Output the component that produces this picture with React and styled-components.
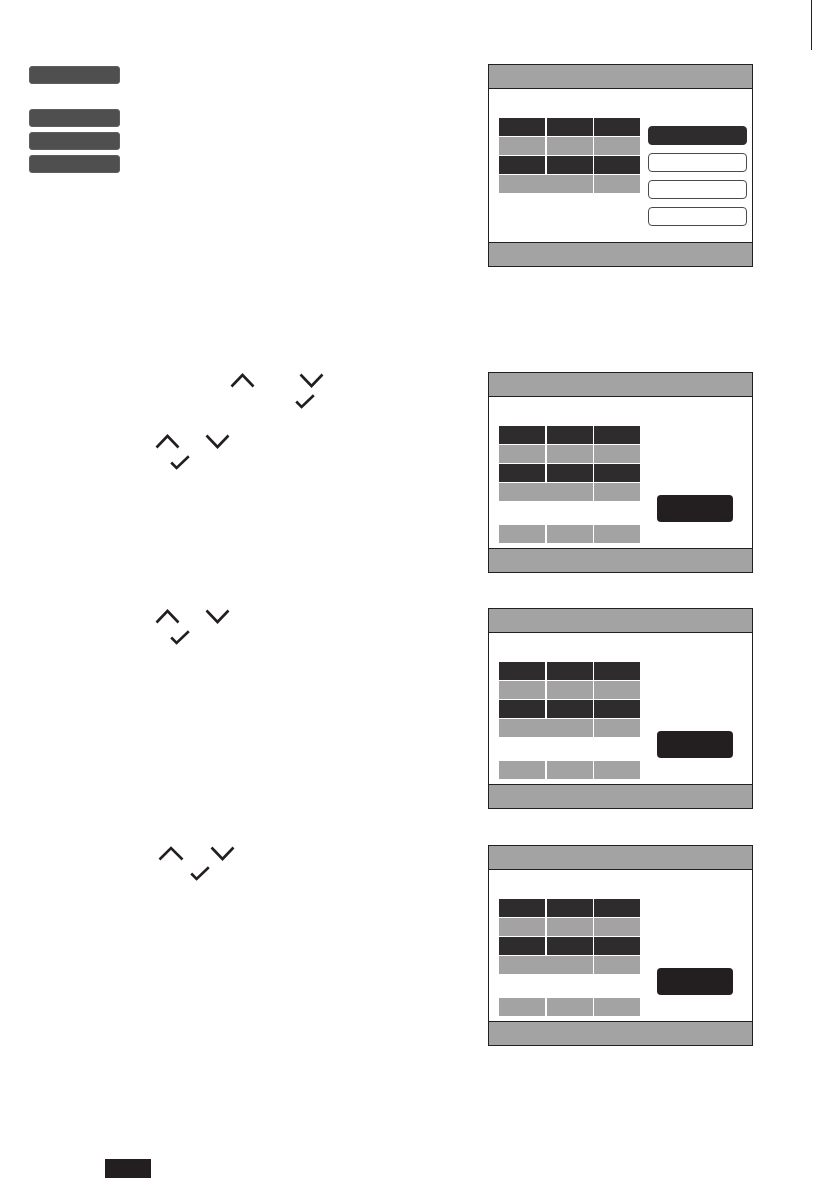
import React from 'react'
import styled, {createGlobalStyle} from 'styled-components'

const GlobalStyle = createGlobalStyle`
    html, body {
        margin: 0;
        padding: 0;
        background: #ffffff;
        font-family: "Liberation Sans", Arial, sans-serif;
    }
`

const INK = '#231f20'
const CELL_DARK = '#2e2c2d'
const CELL_GRAY = '#a3a3a3'

const Page = styled.div`
    width: 839px;
    height: 1191px;
    display: flex;
    flex-direction: column;
    background: #fff;
    overflow: hidden;
`

// crop mark strip along the top
const TopStrip = styled.div`
    height: 64px;
    display: flex;
`
const CropMark = styled.div`
    margin-left: 811px;
    width: 1px;
    height: 50px;
    background: ${INK};
`

const Section = styled.section`
    display: flex;
    margin-top: ${p => p.$top || 0}px;
`
const LeftCol = styled.div`
    flex: 1;
    display: flex;
    flex-direction: column;
`
const PanelSlot = styled.div`
    width: 265px;
    margin-right: 86px;
`

// menu key buttons on the left
const KeyStack = styled.div`
    display: flex;
    flex-direction: column;
    padding-left: 29px;
    padding-top: 2px;
`
const Key = styled.div`
    width: 91px;
    height: 18px;
    box-sizing: border-box;
    border-radius: 3px;
    background: #4f4f4f;
    border: 1px solid #5e5e5e;
    margin-top: ${p => p.$gap || 0}px;
`

// lines of (invisible) text holding the key glyphs
const IconLine = styled.div`
    display: flex;
    align-items: flex-start;
    padding-left: ${p => p.$indent}px;
    gap: ${p => p.$gap || 0}px;
    margin-top: ${p => p.$top || 0}px;
    height: ${p => p.$h || 15}px;
`

const Panel = styled.div`
    box-sizing: border-box;
    width: 265px;
    height: ${p => p.$h || 201}px;
    border: 1.5px solid ${INK};
    display: flex;
    flex-direction: column;
`
const Bar = styled.div`
    height: 23px;
    background: ${CELL_GRAY};
    border-${p => p.$edge}: 1.5px solid ${INK};
`
const Body = styled.div`
    flex: 1;
    display: flex;
    padding: 29px 0 0 10px;
`
const Grid = styled.div`
    display: grid;
    grid-template-columns: 46px 46px 46px;
    column-gap: 1.5px;
    row-gap: 1px;
    align-content: start;
`
const Cell = styled.div`
    height: 18px;
    background: ${p => (p.$dark ? CELL_DARK : CELL_GRAY)};
    grid-column: ${p => (p.$span ? `span ${p.$span}` : 'auto')};
`
const RowGap = styled.div`
    grid-column: span 3;
    height: 22px;
`
const Options = styled.div`
    display: flex;
    flex-direction: column;
    gap: 8px;
    margin-left: 8px;
    padding-top: 8px;
`
const Option = styled.div`
    box-sizing: border-box;
    width: 99px;
    height: 19px;
    border-radius: 4px;
    background: ${p => (p.$active ? CELL_DARK : '#fff')};
    border: 1px solid ${p => (p.$active ? CELL_DARK : '#4a4a4a')};
`
const OkButton = styled.div`
    width: 76px;
    height: 27px;
    border-radius: 4px;
    background: ${INK};
    margin-left: 17px;
    margin-top: 69px;
`

const PageTag = styled.div`
    width: 46px;
    height: 19px;
    background: ${INK};
    margin-left: 105px;
`

const Up = ({w = 25}) => (
    <svg width={w} height="15" viewBox={`0 0 ${w} 15`}>
        <polyline points={`1.5,13.5 ${w / 2},2 ${w - 1.5},13.5`} fill="none" stroke={INK} strokeWidth="2.6" />
    </svg>
)
const Down = ({w = 25}) => (
    <svg width={w} height="15" viewBox={`0 0 ${w} 15`}>
        <polyline points={`1.5,1.5 ${w / 2},13 ${w - 1.5},1.5`} fill="none" stroke={INK} strokeWidth="2.6" />
    </svg>
)
const Check = () => (
    <svg width="20" height="15" viewBox="0 0 20 15">
        <polyline points="1.2,7.5 6.6,13 18.8,1.2" fill="none" stroke={INK} strokeWidth="2.6" />
    </svg>
)

const DataGrid = ({extra}) => (
    <Grid>
        <Cell $dark /><Cell $dark /><Cell $dark />
        <Cell /><Cell /><Cell />
        <Cell $dark /><Cell $dark /><Cell $dark />
        <Cell $span={2} /><Cell />
        {extra && <RowGap />}
        {extra && <Cell />}
        {extra && <Cell />}
        {extra && <Cell />}
    </Grid>
)

const MenuScreen = () => (
    <Panel $h={203}>
        <Bar $edge="bottom" />
        <Body>
            <DataGrid />
            <Options>
                <Option $active />
                <Option />
                <Option />
                <Option />
            </Options>
        </Body>
        <Bar $edge="top" />
    </Panel>
)

const ConfirmScreen = () => (
    <Panel>
        <Bar $edge="bottom" />
        <Body>
            <DataGrid extra />
            <OkButton />
        </Body>
        <Bar $edge="top" />
    </Panel>
)

const App = () => {
    return (
        <Page>
            <GlobalStyle />

            <TopStrip>
                <CropMark />
            </TopStrip>

            <Section>
                <LeftCol>
                    <KeyStack>
                        <Key />
                        <Key $gap={25} />
                        <Key $gap={5} />
                        <Key $gap={5} />
                    </KeyStack>
                </LeftCol>
                <PanelSlot>
                    <MenuScreen />
                </PanelSlot>
            </Section>

            <Section $top={105}>
                <LeftCol>
                    <IconLine $indent={230} $gap={44} $top={1}>
                        <Up /><Down />
                    </IconLine>
                    <IconLine $indent={295} $top={6}>
                        <Check />
                    </IconLine>
                    <IconLine $indent={155} $gap={25} $top={25}>
                        <Up /><Down />
                    </IconLine>
                    <IconLine $indent={170} $top={6}>
                        <Check />
                    </IconLine>
                </LeftCol>
                <PanelSlot>
                    <ConfirmScreen />
                </PanelSlot>
            </Section>

            <Section $top={35}>
                <LeftCol>
                    <IconLine $indent={155} $gap={25} $top={1}>
                        <Up /><Down />
                    </IconLine>
                    <IconLine $indent={170} $top={6}>
                        <Check />
                    </IconLine>
                </LeftCol>
                <PanelSlot>
                    <ConfirmScreen />
                </PanelSlot>
            </Section>

            <Section $top={36}>
                <LeftCol>
                    <IconLine $indent={158} $gap={26} $top={1}>
                        <Up w={26} /><Down />
                    </IconLine>
                    <IconLine $indent={190} $top={5}>
                        <Check />
                    </IconLine>
                </LeftCol>
                <PanelSlot>
                    <ConfirmScreen />
                </PanelSlot>
            </Section>

            <Section $top={113}>
                <PageTag />
            </Section>
        </Page>
    )
}

export default App
